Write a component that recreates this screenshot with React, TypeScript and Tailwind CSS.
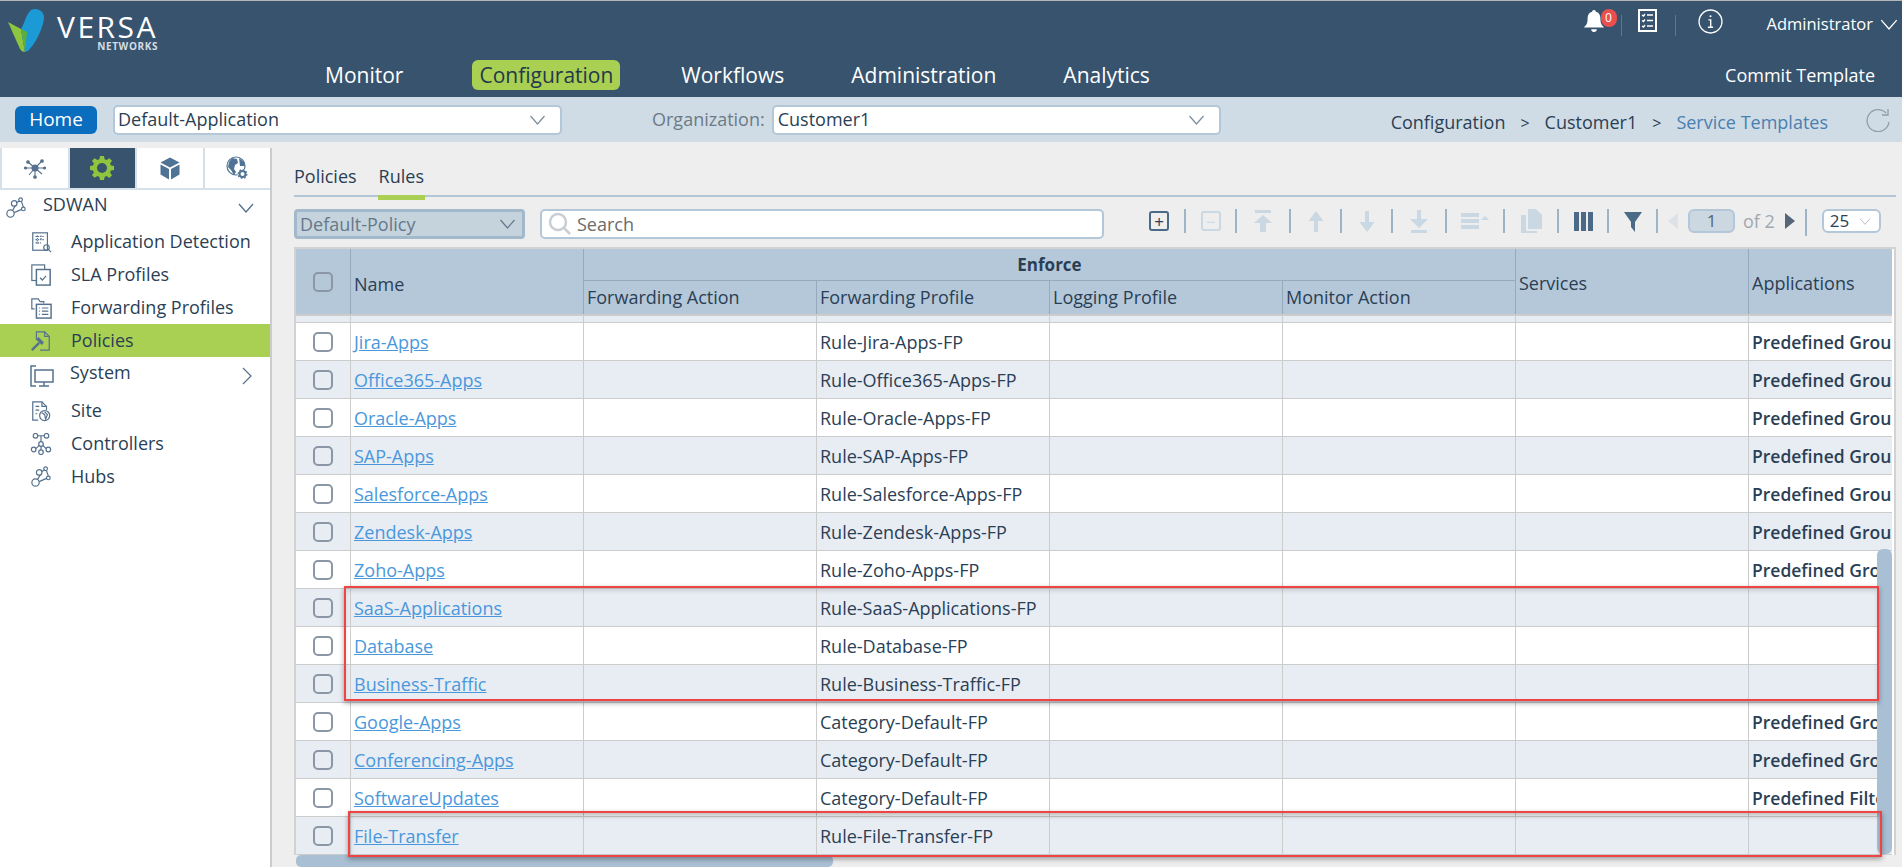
import type { ReactNode } from "react";

const ROWS = [
  ["Jira-Apps", "Rule-Jira-Apps-FP", "Predefined Groups"],
  ["Office365-Apps", "Rule-Office365-Apps-FP", "Predefined Groups"],
  ["Oracle-Apps", "Rule-Oracle-Apps-FP", "Predefined Groups"],
  ["SAP-Apps", "Rule-SAP-Apps-FP", "Predefined Groups"],
  ["Salesforce-Apps", "Rule-Salesforce-Apps-FP", "Predefined Groups"],
  ["Zendesk-Apps", "Rule-Zendesk-Apps-FP", "Predefined Groups"],
  ["Zoho-Apps", "Rule-Zoho-Apps-FP", "Predefined Groups"],
  ["SaaS-Applications", "Rule-SaaS-Applications-FP", ""],
  ["Database", "Rule-Database-FP", ""],
  ["Business-Traffic", "Rule-Business-Traffic-FP", ""],
  ["Google-Apps", "Category-Default-FP", "Predefined Groups"],
  ["Conferencing-Apps", "Category-Default-FP", "Predefined Groups"],
  ["SoftwareUpdates", "Category-Default-FP", "Predefined Filters"],
  ["File-Transfer", "Rule-File-Transfer-FP", ""],
];

const GRID = "grid grid-cols-[54px_233px_233px_233px_233px_233px_233px_144px]";

function Chevron({ className = "" }: { className?: string }) {
  return (
    <svg viewBox="0 0 16 10" fill="none" stroke="currentColor" strokeWidth="1.2" className={className}>
      <path d="M1 1l7 8 7-8" />
    </svg>
  );
}

function Check() {
  return <span className="block h-[20px] w-[20px] rounded-[5px] border-2 border-[#8b97a6]" />;
}

function SideIcon({ children }: { children: ReactNode }) {
  return (
    <svg viewBox="0 0 24 24" fill="none" stroke="#55718d" strokeWidth="1.3" className="h-[22px] w-[22px] shrink-0">
      {children}
    </svg>
  );
}

function HubsIcon() {
  return (
    <>
      <circle cx="6" cy="18" r="4" />
      <circle cx="10" cy="7" r="3" />
      <circle cx="17" cy="3" r="2" />
      <circle cx="20" cy="13" r="2" />
      <path d="M10 17l8-3.500M11 10l-3 5M13 6l3-2M18 5l2 6" />
    </>
  );
}

function SideItem({ label, icon, active }: { label: string; icon: ReactNode; active?: boolean }) {
  return (
    <div className={`flex h-[33px] shrink-0 items-center pl-[30px] text-[18px] text-[#2a3f55] ${active ? "bg-[#a9d052]" : ""}`}>
      <SideIcon>{icon}</SideIcon>
      <span className="ml-[19px] whitespace-nowrap">{label}</span>
    </div>
  );
}

function TopBar() {
  return (
    <header className="h-[97px] shrink-0 border-t border-[#b5b5b5] bg-[#37536e] text-white">
      <div className="flex h-[58px]">
        <div className="ml-[8px] mt-[8px] flex items-start">
          <svg viewBox="0 0 37 43" className="h-[43px] w-[37px]">
            <path d="M0 13l13 7 4 23c-2 0-4-1-5-3z" fill="#8cc63f" />
            <path d="M13 20c4-6 4-13 10-19 7-3 14 2 13 9-2 12-9 25-16 32l-3 1z" fill="#1b9ad6" />
            <path d="M13 20l6 3-2 20z" fill="#5fae3d" />
          </svg>
          <div className="ml-[11px] flex w-[102px] flex-col items-end">
            <span className="mt-[4px] text-[30px] font-normal leading-[28px] tracking-[2.5px]">VERSA</span>
            <span className="text-[10px] font-bold leading-[11px] tracking-[0.6px] text-[#d5dce3]">NETWORKS</span>
          </div>
        </div>

        <div className="ml-auto flex items-start pr-[4px] pt-[8px]">
          <div className="relative h-[24px] w-[38px]">
            <svg viewBox="0 0 24 26" fill="white" className="h-[24px] w-[22px]">
              <path d="M12 1c1.400 0 2 1 2 2 4 1 5 4 5 8 0 5 2 7 4 9H1c2-2 4-4 4-9 0-4 1-7 5-8 0-1 .6-2 2-2zM9 22h6a3 3 0 01-6 0z" />
            </svg>
            <span className="absolute left-[18px] top-0 flex h-[18px] w-[16px] items-center justify-center rounded-full bg-[#ea4f4f] text-[12px] leading-none">
              0
            </span>
          </div>
          <span className="mt-[6px] h-[21px] w-[1px] bg-[#5f7890]" />
          <svg viewBox="0 0 19 23" fill="none" stroke="white" className="ml-[16px] h-[23px] w-[19px]" strokeWidth="2">
            <rect x="1" y="1" width="17" height="21" />
            <path d="M9 6h6M9 11.500h6M9 17h6M4 6l1.500 1L7 5M4 11.500l1.500 1L7 10.500M4 17l1.500 1L7 16" strokeWidth="1.300" />
          </svg>
          <span className="ml-[18px] mt-[6px] h-[21px] w-[1px] bg-[#5f7890]" />
          <svg viewBox="0 0 24 24" fill="none" stroke="white" strokeWidth="1.300" className="ml-[22px] h-[25px] w-[25px]">
            <circle cx="12" cy="12" r="11" />
            <path d="M10 10.500h2.200V17.500M9.500 17.500h5" />
            <circle cx="12" cy="7" r="1" fill="white" stroke="none" />
          </svg>
          <span className="ml-[44px] mt-[3px] text-[16.500px] leading-[24px]">Administrator</span>
          <Chevron className="ml-[7px] mt-[10px] h-[11px] w-[18px]" />
        </div>
      </div>

      <nav className="flex h-[38px] items-start pl-[325px] pt-[1px] text-[21px] leading-[30px]">
        <span>Monitor</span>
        <span className="ml-[69px] rounded-[6px] bg-[#a9d052] px-[7px] text-[#24384c]">Configuration</span>
        <span className="ml-[61px]">Workflows</span>
        <span className="ml-[67px]">Administration</span>
        <span className="ml-[67px]">Analytics</span>
        <span className="ml-auto pr-[27px] text-[18px]">Commit Template</span>
      </nav>
    </header>
  );
}

function SubBar() {
  return (
    <div className="flex h-[45px] shrink-0 items-center bg-[#cfdce5] text-[18px] text-[#2a3f55]">
      <span className="ml-[15px] flex h-[28px] w-[82px] items-center justify-center rounded-[6px] bg-[#0a6dbd] text-[19px] text-white">
        Home
      </span>
      <div className="ml-[16px] flex h-[30px] w-[449px] items-center justify-between rounded-[5px] border-2 border-[#b3c7d8] bg-white pl-[3px] pr-[14px]">
        Default-Application
        <Chevron className="h-[10px] w-[17px] text-[#7d8c9b]" />
      </div>
      <span className="ml-[90px] text-[#6d7a87]">Organization:</span>
      <div className="ml-[7px] flex h-[30px] w-[449px] items-center justify-between rounded-[5px] border-2 border-[#b3c7d8] bg-white pl-[4px] pr-[14px]">
        Customer1
        <Chevron className="h-[10px] w-[17px] text-[#7d8c9b]" />
      </div>
      <div className="ml-auto mt-[6px] flex items-center">
        <span>Configuration</span>
        <span className="ml-[15px] text-[16px]">&gt;</span>
        <span className="ml-[15px]">Customer1</span>
        <span className="ml-[15px] text-[16px]">&gt;</span>
        <span className="ml-[15px] text-[#4a7fb0]">Service Templates</span>
      </div>
      <svg viewBox="0 0 24 24" fill="none" stroke="#8f9da9" strokeWidth="1.300" className="ml-[38px] mr-[12px] h-[24px] w-[24px]">
        <path d="M20 5a11 11 0 10 3 9M22 1v6h-6" />
      </svg>
    </div>
  );
}

function Sidebar() {
  return (
    <aside className="flex h-full w-[272px] shrink-0 flex-col border-r-2 border-[#cccccc] bg-white">
      <div className="grid h-[42px] shrink-0 grid-cols-4 gap-[2px] border-b-2 border-[#d5e0e9] bg-[#d5e0e9] pl-[2px]">
        <div className="flex items-center justify-center bg-white">
          <svg viewBox="0 0 22 22" fill="#55718d" stroke="#55718d" strokeWidth="1.100" className="h-[22px] w-[22px]">
            <circle cx="11" cy="11" r="3" />
            <path d="M11 11L4 5M11 11l7-7M11 11H1M11 11h10M11 11l-6 7M11 11l7 6M11 11v10" />
            <circle cx="4" cy="5" r="1.300" />
            <circle cx="18" cy="4" r="1.300" />
            <circle cx="1.500" cy="11" r="1" />
            <circle cx="20.500" cy="11" r="1" />
            <circle cx="11" cy="20" r="1.300" />
          </svg>
        </div>
        <div className="flex items-center justify-center bg-[#37536e]">
          <svg viewBox="0 0 24 24" className="h-[24px] w-[24px]" fill="#8fc43f">
            <path
              fillRule="evenodd"
              d="M10 0h4l.6 3.200 2 .8L19.400 2.200l2.600 2.600-1.900 2.700.9 2 3 .5v4l-3 .6-.9 2 1.900 2.700-2.600 2.600-2.800-1.800-2 .8L14 24h-4l-.6-3.100-2-.8L4.600 21.800 2 19.200l1.900-2.700-.9-2-3-.6v-4l3-.5.9-2L2 4.800l2.600-2.600 2.800 1.800 2-.8zM12 7a5 5 0 100 10 5 5 0 000-10z"
            />
          </svg>
        </div>
        <div className="flex items-center justify-center bg-white">
          <svg viewBox="0 0 20 22" className="h-[23px] w-[20px]" fill="#4f7394">
            <path d="M10 0l9.500 5L10 10 .5 5zM.5 7l8.500 4.500V22L.5 17zM19.500 7L11 11.500V22l8.500-5z" />
          </svg>
        </div>
        <div className="flex items-center justify-center bg-white">
          <svg viewBox="0 0 22 24" className="h-[24px] w-[22px]">
            <circle cx="10" cy="10" r="9" fill="none" stroke="#4f7394" strokeWidth="1.200" />
            <path d="M6 2l5 1 1 4-3 2-1 4 2 3-2 3-3-5-3-3 1-5zM13 2l5 4 1 4h-5z" fill="#4f7394" />
            <circle cx="16.500" cy="18" r="5" fill="white" />
            <circle cx="16.500" cy="18" r="3" fill="none" stroke="#4f7394" strokeWidth="2" />
            <circle cx="16.500" cy="18" r="4.400" fill="none" stroke="#4f7394" strokeWidth="1.200" strokeDasharray="1.700 1.700" />
          </svg>
        </div>
      </div>

      <div className="flex h-[35px] shrink-0 items-center pl-[5px] pr-[15px] text-[18px] text-[#2a3f55]">
        <SideIcon><HubsIcon /></SideIcon>
        <span className="ml-[16px] -translate-y-[3px]">SDWAN</span>
        <Chevron className="ml-auto h-[10px] w-[18px] text-[#4d6c8a]" />
      </div>
      <SideItem
        label="Application Detection"
        icon={<><rect x="3" y="2" width="16" height="19" /><path d="M6 6h10M6 9.500h10M6 13h6M8 5v9M12 5v5" strokeDasharray="1.500 1" /><circle cx="18" cy="18" r="3" /><path d="M20 20l3 3" /></>}
      />
      <SideItem
        label="SLA Profiles"
        icon={<><rect x="2" y="1" width="14" height="17" /><rect x="7" y="6" width="15" height="17" fill="white" strokeWidth="1.600" /><path d="M11 15l2.500 2.500 4-4.500" /></>}
      />
      <SideItem
        label="Forwarding Profiles"
        icon={<><path d="M5 13H2V2h7l2 3h4v2" /><rect x="7" y="8" width="16" height="15" strokeWidth="1.600" /><path d="M10 12h1M13 12h7M10 15.500h1M13 15.500h7M10 19h1M13 19h7" /></>}
      />
      <SideItem
        active
        label="Policies"
        icon={<><path d="M7 11V2h9l5 5v15H11" /><path d="M16 2v5h5" /><path d="M2 22l8-8" strokeWidth="2.600" /><path d="M8 9l6 6" strokeWidth="3.500" /></>}
      />
      <div className="flex h-[37px] shrink-0 items-center pl-[30px] pr-[18px] text-[18px] text-[#2a3f55]">
        <svg viewBox="0 0 24 22" fill="none" stroke="#55718d" strokeWidth="1.500" className="h-[22px] w-[24px] shrink-0">
          <path d="M6 1H1v20h5M5 5h18v12H5zM9 21h10M14 17v4" />
        </svg>
        <span className="ml-[16px] -translate-y-[3px]">System</span>
        <svg viewBox="0 0 10 18" fill="none" stroke="#55718d" strokeWidth="1.200" className="ml-auto h-[18px] w-[10px]">
          <path d="M1 1l8 8-8 8" />
        </svg>
      </div>
      <SideItem
        label="Site"
        icon={<><path d="M9 22H3V2h10l5 5v4" /><path d="M13 2v5h5M6 7h4M6 11h4M6 15h2" /><circle cx="16" cy="17" r="5.500" /><path d="M13 14l3 2 1 5 2-5-3-3" /></>}
      />
      <SideItem
        label="Controllers"
        icon={<><circle cx="6" cy="3" r="2.500" /><circle cx="18" cy="3" r="2.500" /><circle cx="12" cy="12" r="2.500" /><circle cx="4" cy="18" r="2.500" /><circle cx="12" cy="21" r="2.500" /><circle cx="20" cy="18" r="2.500" /><path d="M8.500 3h7M12 3v6.500M6.500 17l3.500-3.500M17.500 17L14 13.500M12 14.500V18.500" /></>}
      />
      <SideItem label="Hubs" icon={<HubsIcon />} />
    </aside>
  );
}

function ToolIcon({ children, on }: { children: ReactNode; on?: boolean }) {
  return (
    <svg viewBox="0 0 24 24" className="h-[24px] w-[24px]" fill={on ? "#4a6a87" : "#c9d8e3"}>
      {children}
    </svg>
  );
}

function Tool({ width, children }: { width: string; children: ReactNode }) {
  return (
    <div className={`flex h-[24px] items-center justify-center border-r-2 border-[#9db3c6] ${width}`}>{children}</div>
  );
}

function Toolbar() {
  return (
    <div className="flex h-[50px] items-start pt-[12px] text-[#2a3f55]">
      <div className="flex h-[30px] w-[231px] items-center justify-between rounded-[4px] border-[3px] border-[#a3b9cb] bg-[#c5d3dc] pl-[3px] pr-[6px] text-[18px] text-[#66788a]">
        Default-Policy
        <Chevron className="h-[10px] w-[17px]" />
      </div>
      <div className="ml-[15px] flex h-[30px] w-[564px] items-center rounded-[5px] border-2 border-[#b3c7d8] bg-white pl-[6px] text-[18px] text-[#6b6b6b]">
        <svg viewBox="0 0 24 24" fill="none" stroke="#c8ced4" strokeWidth="2.500" className="h-[24px] w-[24px]">
          <circle cx="10" cy="10" r="8" />
          <path d="M16 16l6 6" />
        </svg>
        <span className="ml-[5px]">Search</span>
      </div>

      <div className="ml-[46px] flex h-[24px] items-center">
        <Tool width="w-[36px] pr-[16px]">
          <span className="flex h-[20px] w-[20px] shrink-0 items-center justify-center rounded-[3px] border-2 border-[#4a6a87] text-[17px] leading-none">+</span>
        </Tool>
        <Tool width="w-[51px]">
          <span className="flex h-[20px] w-[20px] items-center justify-center rounded-[3px] border-2 border-[#c9d8e3] text-[17px] leading-none text-[#c9d8e3]">−</span>
        </Tool>
        <Tool width="w-[54px]"><ToolIcon><path d="M4 1h16v3H4zM12 6l9 8h-6v9H9v-9H3z" /></ToolIcon></Tool>
        <Tool width="w-[51px]"><ToolIcon><path d="M12 2l7.500 10H14v11h-4V12H4.500z" /></ToolIcon></Tool>
        <Tool width="w-[51px]"><ToolIcon><path d="M10 2h4v11h5.500L12 23 4.500 13H10z" /></ToolIcon></Tool>
        <Tool width="w-[54px]"><ToolIcon><path d="M10 1h4v9h7l-9 9-9-9h7zM4 21h16v3H4z" /></ToolIcon></Tool>
        <Tool width="w-[58px]">
          <svg viewBox="0 0 28 18" className="h-[18px] w-[28px]" fill="#c9d8e3"><path d="M0 1h18v4H0zM0 7h18v4H0zM0 13h18v4H0zM20 8l4-4 4 4z" /></svg>
        </Tool>
        <Tool width="w-[54px]"><ToolIcon><path d="M9 0h8l6 6v14H9zM2 6h5v16h11v2H2z" /></ToolIcon></Tool>
        <Tool width="w-[50px]"><ToolIcon on><path d="M3 3h5v19H3zM10 3h5v19h-5zM17 3h5v19h-5z" /></ToolIcon></Tool>
        <Tool width="w-[49px]"><ToolIcon on><path d="M3 3h18l-7 10v10l-4-5v-5z" /></ToolIcon></Tool>
        <svg viewBox="0 0 10 16" className="ml-[10px] h-[16px] w-[10px]" fill="#dde2e8"><path d="M10 0v16L0 8z" /></svg>
        <span className="ml-[10px] flex h-[24px] w-[47px] items-center justify-center rounded-[6px] border-2 border-[#b3c7d8] bg-[#cbd8e1] text-[17px] text-[#556677]">1</span>
        <span className="ml-[8px] text-[18px] text-[#a0a8b0]">of 2</span>
        <svg viewBox="0 0 10 16" className="ml-[10px] h-[16px] w-[10px]" fill="#566578"><path d="M0 0v16l10-8z" /></svg>
        <span className="ml-[10px] mt-[3px] h-[27px] w-[2px] bg-[#9db3c6]" />
        <div className="ml-[15px] flex h-[24px] w-[59px] items-center justify-between rounded-[6px] border-2 border-[#b3c7d8] bg-white pl-[6px] pr-[8px] text-[17px]">
          25
          <Chevron className="h-[7px] w-[12px] text-[#aab4bd]" />
        </div>
      </div>
    </div>
  );
}

function Table() {
  const headCell = "border-l border-[#96aabd] px-[3px]";
  return (
    <div className="w-[1602px] overflow-hidden border-x-2 border-t-2 border-[#d2d2d2] bg-white pr-[2px] text-[18px] text-[#2a3f55]">
      {/* Enforce spans four columns */}
      <div className={`${GRID} h-[67px] grid-rows-[32px_33px] border-b-2 border-[#cccccc] bg-[#b5c8d9]`}>
        <div className="row-span-2 flex items-center justify-center">
          <Check />
        </div>
        <div className={`${headCell} row-span-2 flex items-center pt-[5px]`}>Name</div>
        <div className={`${headCell} col-span-4 flex items-center justify-center border-b border-b-[#96aabd] text-[17px] font-bold`}>Enforce</div>
        <div className={`${headCell} row-span-2 flex items-center pt-[4px]`}>Services</div>
        <div className={`${headCell} row-span-2 flex items-center pt-[4px]`}>Applications</div>
        <div className={`${headCell} flex items-center`}>Forwarding Action</div>
        <div className={`${headCell} flex items-center`}>Forwarding Profile</div>
        <div className={`${headCell} flex items-center`}>Logging Profile</div>
        <div className={`${headCell} flex items-center`}>Monitor Action</div>
      </div>
      <div className={`${GRID} h-[7px] border-b border-[#cccccc] bg-[#e8ecf3]`}>
        {Array.from({ length: 8 }, (_, i) => (
          <span key={i} className={i ? "border-l border-[#cccccc]" : ""} />
        ))}
      </div>
      {ROWS.map(([name, profile, app], i) => (
        <div
          key={name}
          className={`${GRID} h-[38px] border-b border-[#cccccc] ${i % 2 ? "bg-[#e8ecf3]" : "bg-white"}`}
        >
          <div className="flex items-center justify-center">
            <Check />
          </div>
          <div className="flex items-center border-l border-[#cccccc] px-[3px] pt-[1px]">
            <a className="text-[#4a98dc] underline">{name}</a>
          </div>
          <div className="border-l border-[#cccccc]" />
          <div className="flex items-center border-l border-[#cccccc] px-[3px] pt-[1px]">{profile}</div>
          <div className="border-l border-[#cccccc]" />
          <div className="border-l border-[#cccccc]" />
          <div className="border-l border-[#cccccc]" />
          <div className="flex items-center overflow-hidden whitespace-nowrap border-l border-[#cccccc] pl-[3px] pt-[1px] text-[17.500px] font-semibold">
            {app}
          </div>
        </div>
      ))}
    </div>
  );
}

export default function App() {
  return (
    <div className="flex h-[867px] w-[1902px] flex-col overflow-hidden bg-[#eeeeee] font-['Open_Sans',sans-serif]">
      <TopBar />
      <SubBar />
      <div className="flex min-h-0 flex-1 pt-[6px]">
        <Sidebar />
        <main className="relative min-w-0 flex-1 pl-[22px] pr-[6px]">
          <div className="flex h-[49px] items-end gap-[22px] border-b-[2px] border-[#b3c7d8] text-[18px] text-[#2a3f55]">
            <span className="pb-[5px]">Policies</span>
            <span className="relative pb-[5px]">
              Rules
              <span className="absolute -bottom-[5px] left-[-1px] right-[-1px] h-[5px] bg-[#a9d052]" />
            </span>
          </div>
          <Toolbar />
          <Table />

          {/* Scrollbars and the annotation boxes lie over the table */}
          <div className="absolute left-[1605px] top-[401px] h-[305px] w-[15px] rounded-[6px] bg-[#a9bfd4]" />
          <div className="absolute left-[24px] top-[707px] h-[12px] w-[537px] rounded-[5px] bg-[#a9bfd4]" />
          <div className="pointer-events-none absolute left-[72px] top-[438px] h-[115px] w-[1535px] border-[2px] border-[#ee4444] shadow-[0_2px_5px_rgba(0,0,0,0.35),inset_0_3px_4px_rgba(0,0,0,0.12)]" />
          <div className="pointer-events-none absolute left-[76px] top-[663px] h-[46px] w-[1534px] border-[2px] border-[#ee4444] shadow-[0_2px_5px_rgba(0,0,0,0.35),inset_0_3px_4px_rgba(0,0,0,0.25)]" />
        </main>
      </div>
    </div>
  );
}
